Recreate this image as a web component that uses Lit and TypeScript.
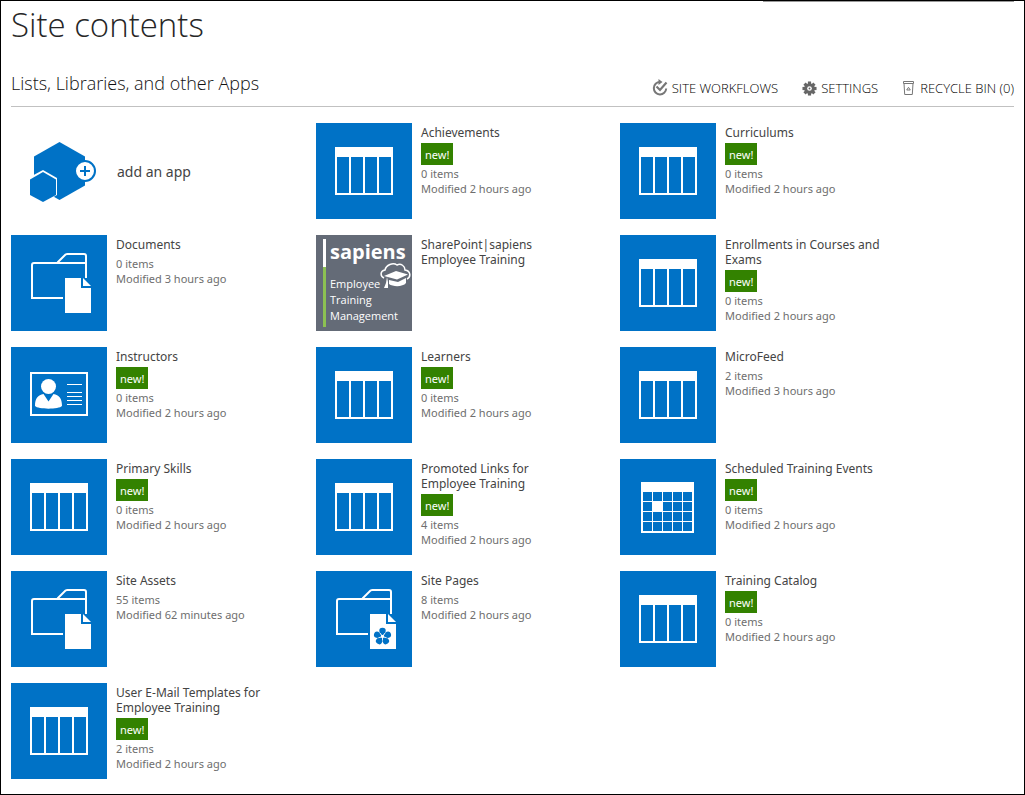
import { LitElement, html, css, svg, nothing } from "lit";
import { customElement, property } from "lit/decorators.js";

type IconName = "list" | "library" | "pages" | "contacts" | "calendar" | "sapiens";

interface SiteApp {
  title: string;
  icon: IconName;
  items?: number;
  modified?: string;
  isNew?: boolean;
}

const APPS: SiteApp[] = [
  { title: "Achievements", icon: "list", items: 0, modified: "2 hours ago", isNew: true },
  { title: "Curriculums", icon: "list", items: 0, modified: "2 hours ago", isNew: true },
  { title: "Documents", icon: "library", items: 0, modified: "3 hours ago" },
  { title: "SharePoint|sapiens Employee Training", icon: "sapiens" },
  { title: "Enrollments in Courses and Exams", icon: "list", items: 0, modified: "2 hours ago", isNew: true },
  { title: "Instructors", icon: "contacts", items: 0, modified: "2 hours ago", isNew: true },
  { title: "Learners", icon: "list", items: 0, modified: "2 hours ago", isNew: true },
  { title: "MicroFeed", icon: "list", items: 2, modified: "3 hours ago" },
  { title: "Primary Skills", icon: "list", items: 0, modified: "2 hours ago", isNew: true },
  { title: "Promoted Links for Employee Training", icon: "list", items: 4, modified: "2 hours ago", isNew: true },
  { title: "Scheduled Training Events", icon: "calendar", items: 0, modified: "2 hours ago", isNew: true },
  { title: "Site Assets", icon: "library", items: 55, modified: "62 minutes ago" },
  { title: "Site Pages", icon: "pages", items: 8, modified: "2 hours ago" },
  { title: "Training Catalog", icon: "list", items: 0, modified: "2 hours ago", isNew: true },
  { title: "User E-Mail Templates for Employee Training", icon: "list", items: 2, modified: "2 hours ago", isNew: true },
];

const BLUE = "#0072c6";

const folder = svg`
  <path d="M52 63H21V30a2 2 0 0 1 2-2H75" fill="none" stroke="#fff" stroke-width="2"/>
  <path d="M46.500 27.500L54.500 19.500Q55.300 19 56.500 19H73a2 2 0 0 1 2 2V43" fill="none" stroke="#fff" stroke-width="2"/>
  <path d="M54 43H70V53H80V78H54Z" fill="#fff"/>
  <path d="M72 43V51H80Z" fill="#fff"/>`;

const ICONS = {
  list: svg`
    <path d="M19 24H77V72H19Z" fill="#fff"/>
    <path d="M21 34H33V70H21ZM35 34H47V70H35ZM49 34H61V70H49ZM63 34H75V70H63Z" fill="${BLUE}"/>`,
  library: folder,
  pages: svg`${folder}
    <g fill="${BLUE}" transform="translate(66.500 65.500)">
      ${[0, 72, 144, 216, 288].map(
        (a) => svg`<path d="M0-1C-4-3.500-4.600-8.800 0-8.800S4-3.500 0-1Z" transform="rotate(${a})"/>`
      )}
      <circle r="1.500" fill="#fff"/>
      <path d="M0 0L-2.500-3.500M0 0L2.500-3.500M0 0L4 1.300M0 0V4M0 0L-4 1.300" stroke="#fff" stroke-width=".8"/>
    </g>`,
  contacts: svg`
    <rect x="20" y="26" width="56" height="42" fill="none" stroke="#fff" stroke-width="2"/>
    <circle cx="37.500" cy="39.500" r="7.500" fill="#fff"/>
    <path d="M24 59C24 51 27 48 32.500 47L37.500 54.500L42.500 47C48 48 51 51 51 59C48 62.500 27 62.500 24 59Z" fill="#fff"/>
    <path d="M56 37.500H71M56 45.500H71M56 49.500H71M56 53.500H71M56 57.500H71" stroke="#fff"/>`,
  calendar: svg`
    <path d="M21 23H74V74H21Z" fill="#fff"/>
    ${[0, 1, 2, 3].map((r) =>
      [0, 1, 2, 3, 4].map((c) =>
        r === 1 && c === 1
          ? nothing
          : svg`<rect x="${23 + c * 10}" y="${33 + r * 10}" width="9" height="9" fill="${BLUE}"/>`
      )
    )}`,
};

@customElement("app-tile")
class AppTile extends LitElement {
  @property({ attribute: false }) app!: SiteApp;

  static styles = css`
    :host { display: block; }
    .tile { display: flex; gap: 9px; }
    .thumb { flex: none; width: 96px; height: 96px; background: #0072c6; }
    .thumb svg { display: block; }
    .body { padding-top: 2px; max-width: 164px; font-size: 12px; line-height: 15px; color: #777; }
    .title { display: block; color: #444; text-decoration: none; margin-bottom: 4px; }
    .title.tight { margin-bottom: 3px; }
    .new {
      display: block; width: max-content; padding: 4px 4px 3px; margin-bottom: 1px;
      background: #338200; color: #fff; font-size: 11px;
    }
    .meta { margin: 0; white-space: nowrap; font-size: 11px; color: #6e6e6e; }
    .logo { display: flex; gap: 4px; padding: 4px 0 0 7px; box-sizing: border-box; background: #646b77; color: #fff; }
    .bar { width: 3px; height: 88px; background: linear-gradient(#fff 28px, #8cc152 28px); }
    .words { position: relative; }
    .brand { display: block; font: 700 20px/26px "Open Sans", "Noto Sans", sans-serif; }
    .lines { display: block; margin-top: 11px; font: 11px/16px "Open Sans", "Noto Sans", sans-serif; }
    .cap { position: absolute; left: 50px; top: 23px; }
  `;

  render() {
    const { title, icon, items, modified, isNew } = this.app;
    return html`<article class="tile">
      ${icon === "sapiens"
        ? html`<div class="thumb logo">
            <span class="bar"></span>
            <div class="words">
              <span class="brand">sapiens</span>
              <span class="lines">Employee<br />Training<br />Management</span>
              <svg class="cap" width="32" height="28" viewBox="0 0 32 28" aria-hidden="true">
                <path d="M4 16C0 14 0 9 5 8C6 3 13 0 17 3C21 1 25 4 25 8C31 9 31 15 27 17" fill="none" stroke="#fff" stroke-width="1.500"/>
                <path d="M4 14L16 9L28 12.500L17 17.500Z" fill="#fff"/>
                <path d="M9 18L18 20L26 16V21C23 25 13 25 9 22Z" fill="#fff"/>
                <path d="M7 15L6 21L4 26H8L8 20Z" fill="#fff"/>
              </svg>
            </div>
          </div>`
        : html`<div class="thumb"><svg width="96" height="96" viewBox="0 0 96 96" aria-hidden="true">${ICONS[icon]}</svg></div>`}
      <div class="body">
        <a class="title ${isNew ? "tight" : ""}" href="#">${title}</a>
        ${isNew ? html`<span class="new">new!</span>` : nothing}
        ${items === undefined
          ? nothing
          : html`<p class="meta">${items} items</p><p class="meta">Modified ${modified}</p>`}
      </div>
    </article>`;
  }
}

@customElement("app-root")
class AppRoot extends LitElement {
  static styles = css`
    :host {
      display: block; box-sizing: border-box; min-height: 100vh; padding: 0 10px 15px;
      border: 1px solid #000; background: #fff; color: #444;
      font-family: "Noto Sans", "Open Sans", sans-serif;
    }
    .rule { height: 1px; width: 25%; margin-left: auto; background: #999; }
    h1, h2, .action { font-family: "Open Sans", "Noto Sans", sans-serif; font-weight: 300; }
    h1 { margin: 0; font-size: 33px; line-height: 46px; color: #262626; }
    .header {
      display: flex; justify-content: space-between; align-items: flex-end;
      margin-top: 16px; height: 42px; border-bottom: 1px solid #c1c1c1;
    }
    h2 { margin: 0 0 10px; font-size: 18px; line-height: 26px; color: #111; }
    .actions { display: flex; gap: 24px; margin-bottom: 8px; }
    .action { display: flex; align-items: center; gap: 4px; font-size: 13px; line-height: 20px; color: #000; text-decoration: none; }
    .grid { display: grid; grid-template-columns: 305px 304px 1fr; row-gap: 16px; margin-top: 16px; }
    .add { display: flex; align-items: center; gap: 10px; height: 96px; color: #444; font-size: 14px; text-decoration: none; }
  `;

  render() {
    return html`
      <div class="rule"></div>
      <h1>Site contents</h1>
      <div class="header">
        <h2>Lists, Libraries, and other Apps</h2>
        <nav class="actions">
          <a class="action" href="#">
            <svg width="16" height="18" viewBox="0 0 16 18" fill="none" stroke="#777" aria-hidden="true">
              <path d="M8 3A6.200 6.200 0 1 0 14.200 9.500" stroke-width="2"/><path d="M4.500 7.500L8 11L14.500 3.500" stroke-width="2.200"/><path d="M6.500 0L10.500 3L6.500 6Z" fill="#777" stroke="none"/>
            </svg>SITE WORKFLOWS</a>
          <a class="action" href="#">
            <svg width="15" height="15" viewBox="0 0 16 16" aria-hidden="true">
              <g fill="#666">${[0, 45, 90, 135].map((a) => svg`<rect x="6.300" y="0.500" width="3.400" height="15" transform="rotate(${a} 8 8)"/>`)}<circle cx="8" cy="8" r="5.700"/></g>
              <circle cx="8" cy="8" r="2.500" fill="#fff"/><circle cx="8" cy="8" r="1" fill="#666"/>
            </svg>SETTINGS</a>
          <a class="action" href="#">
            <svg width="14" height="16" viewBox="0 0 14 16" fill="none" stroke="#777" aria-hidden="true">
              <path d="M1.500 1.500H11.500V3.500H1.500ZM2 3.500L2.700 14.500H10.300L11 3.500"/><path d="M4.700 10L6.500 7.300L8.300 10Z"/>
            </svg>RECYCLE BIN (0)</a>
        </nav>
      </div>
      <main class="grid">
        <a class="add" href="#">
          <svg width="96" height="96" viewBox="0 0 96 96" aria-hidden="true">
            <path d="M48.500 19L74 33.500V62.500L48.500 77L23 62.500V33.500Z" fill="${BLUE}"/>
            <path d="M32 47L46 55V72L32 80L17 72V55Z" fill="#fff"/>
            <path d="M32 49L45 56.500V72L32 79L19 72V56.500Z" fill="${BLUE}"/>
            <circle cx="74" cy="48" r="10" fill="#fff" stroke="${BLUE}" stroke-width="2"/>
            <path d="M69 48H79M74 43V53" stroke="${BLUE}" stroke-width="2"/>
          </svg>add an app</a>
        ${APPS.map((app) => html`<app-tile .app=${app}></app-tile>`)}
      </main>
    `;
  }
}
